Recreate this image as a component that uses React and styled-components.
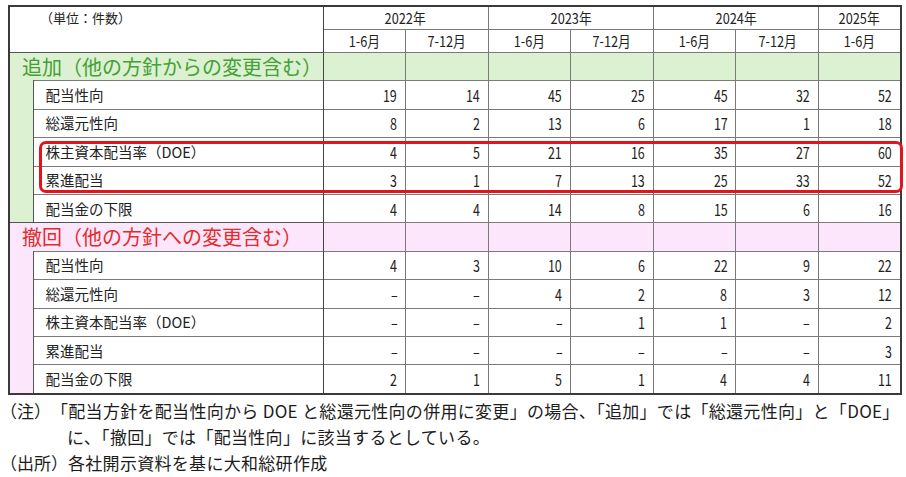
import React from "react";
import styled, { createGlobalStyle } from "styled-components";

const Global = createGlobalStyle`
  html, body { margin: 0; background: #fff; }
  body {
    padding: 5px 0 0 8px;
    font-family: "Noto Sans CJK JP", "Noto Sans", sans-serif;
    color: #222;
  }
`;

const Wrap = styled.div`
  position: relative;
  width: 894px;
`;

const Table = styled.table`
  width: 894px;
  table-layout: fixed;
  border-collapse: collapse;
  border: 2px solid #3a3a3a;
  font-size: 14px;
`;

const Narrow = styled.span`
  display: inline-block;
  transform: scaleX(${(p) => p.$sx || 0.8});
  transform-origin: ${(p) => p.$origin || "center"};
`;

const HeadCell = styled.th`
  font-weight: normal;
  height: 22px;
  padding: 0;
  line-height: 18px;
  border-left: 1px solid #7a7a7a;
  border-bottom: 1px solid #7a7a7a;
  font-size: 15px;
  text-align: center;
  color: #222;
`;

const UnitCell = styled.th`
  font-weight: normal;
  text-align: left;
  vertical-align: top;
  padding: 1px 0 0 30px;
  font-size: 13px;
  border-bottom: 1px solid #555;
  border-right: 1.5px solid #444;
`;

const SectionLabel = styled.td`
  height: 27.4px;
  padding: 0 0 0 12px;
  font-size: 20px;
  line-height: 20px;
  white-space: nowrap;
  color: ${(p) => p.$color};
  background: ${(p) => p.$bg};
  border-top: 1px solid #555;
  border-right: 1.5px solid #444;
`;

const Strip = styled.td`
  background: ${(p) => p.$bg};
  border-right: 1px solid #555;
  padding: 0;
`;

const Label = styled.td`
  height: 27.4px;
  padding: 0 0 0 12px;
  font-size: 14.5px;
  line-height: 18px;
  white-space: nowrap;
  border-top: 1px solid #7a7a7a;
  border-right: 1.5px solid #444;
`;

const Num = styled.td`
  height: 27.4px;
  padding: 0 8px 0 0;
  text-align: right;
  font-size: 16px;
  line-height: 18px;
  background: ${(p) => p.$bg || "transparent"};
  border-top: 1px solid #7a7a7a;
  border-left: 1px solid #7a7a7a;
`;

const Highlight = styled.div`
  position: absolute;
  left: 31px;
  top: 136px;
  width: 858px;
  height: 46px;
  border: 3px solid #e3141b;
  border-radius: 7px;
  pointer-events: none;
`;

const Notes = styled.div`
  margin-top: 3px;
  margin-left: -8px;
  font-size: 17px;
  line-height: 26px;
  color: #1c1c1c;
  white-space: nowrap;
`;

const NoteRow = styled.div`
  display: flex;
`;

const NoteTag = styled.span`
  flex: 0 0 ${(p) => p.$w}px;
`;

const NoteText = styled.span`
  flex: 1;
  letter-spacing: 0.3px;
  padding-left: ${(p) => p.$hang || 0}px;
  text-indent: -${(p) => p.$hang || 0}px;
`;

const years = [
  { y: "2022年", span: 2 },
  { y: "2023年", span: 2 },
  { y: "2024年", span: 2 },
  { y: "2025年", span: 1 },
];
const halves = ["1-6月", "7-12月", "1-6月", "7-12月", "1-6月", "7-12月", "1-6月"];

const sections = [
  {
    title: "追加（他の方針からの変更含む）",
    color: "#45a035",
    bg: "#dbf1d2",
    rows: [
      ["配当性向", [19, 14, 45, 25, 45, 32, 52]],
      ["総還元性向", [8, 2, 13, 6, 17, 1, 18]],
      ["株主資本配当率（DOE）", [4, 5, 21, 16, 35, 27, 60]],
      ["累進配当", [3, 1, 7, 13, 25, 33, 52]],
      ["配当金の下限", [4, 4, 14, 8, 15, 6, 16]],
    ],
  },
  {
    title: "撤回（他の方針への変更含む）",
    color: "#e52a2a",
    bg: "#fce6fb",
    rows: [
      ["配当性向", [4, 3, 10, 6, 22, 9, 22]],
      ["総還元性向", ["-", "-", 4, 2, 8, 3, 12]],
      ["株主資本配当率（DOE）", ["-", "-", "-", 1, 1, "-", 2]],
      ["累進配当", ["-", "-", "-", "-", "-", "-", 3]],
      ["配当金の下限", [2, 1, 5, 1, 4, 4, 11]],
    ],
  },
];

export default function App() {
  return (
    <>
      <Global />
      <Wrap>
        <Table>
          <colgroup>
            <col style={{ width: 24 }} />
            <col style={{ width: 290 }} />
            {halves.map((_, i) => (
              <col key={i} />
            ))}
          </colgroup>
          <thead>
            <tr>
              <UnitCell colSpan={2} rowSpan={2}>（単位：件数）</UnitCell>
              {years.map((y) => (
                <HeadCell key={y.y} colSpan={y.span}>
                  <Narrow $sx={0.85}>{y.y}</Narrow>
                </HeadCell>
              ))}
            </tr>
            <tr>
              {halves.map((h, i) => (
                <HeadCell key={i}>
                  <Narrow $sx={0.85}>{h}</Narrow>
                </HeadCell>
              ))}
            </tr>
          </thead>
          <tbody>
            {sections.map((s) => (
              <React.Fragment key={s.title}>
                <tr>
                  <SectionLabel colSpan={2} $color={s.color} $bg={s.bg}>
                    {s.title}
                  </SectionLabel>
                  {halves.map((_, i) => (
                    <Num key={i} $bg={s.bg} />
                  ))}
                </tr>
                {s.rows.map(([label, vals], r) => (
                  <tr key={label}>
                    {r === 0 && <Strip rowSpan={s.rows.length} $bg={s.bg} />}
                    <Label>{label}</Label>
                    {vals.map((v, i) => (
                      <Num key={i}>
                        <Narrow $sx={0.78} $origin="right">
                          {v === "-" ? "–" : v}
                        </Narrow>
                      </Num>
                    ))}
                  </tr>
                ))}
              </React.Fragment>
            ))}
          </tbody>
        </Table>
        <Highlight />
        <Notes>
          <NoteRow>
            <NoteTag $w={44}>（注）</NoteTag>
            <NoteText $hang={16}>
              「配当方針を配当性向から DOE と総還元性向の併用に変更」の場合、「追加」では「総還元性向」と「DOE」
              <br />
              に、「撤回」では「配当性向」に該当するとしている。
            </NoteText>
          </NoteRow>
          <NoteRow>
            <NoteTag $w={58}>（出所）</NoteTag>
            <NoteText>各社開示資料を基に大和総研作成</NoteText>
          </NoteRow>
        </Notes>
      </Wrap>
    </>
  );
}
